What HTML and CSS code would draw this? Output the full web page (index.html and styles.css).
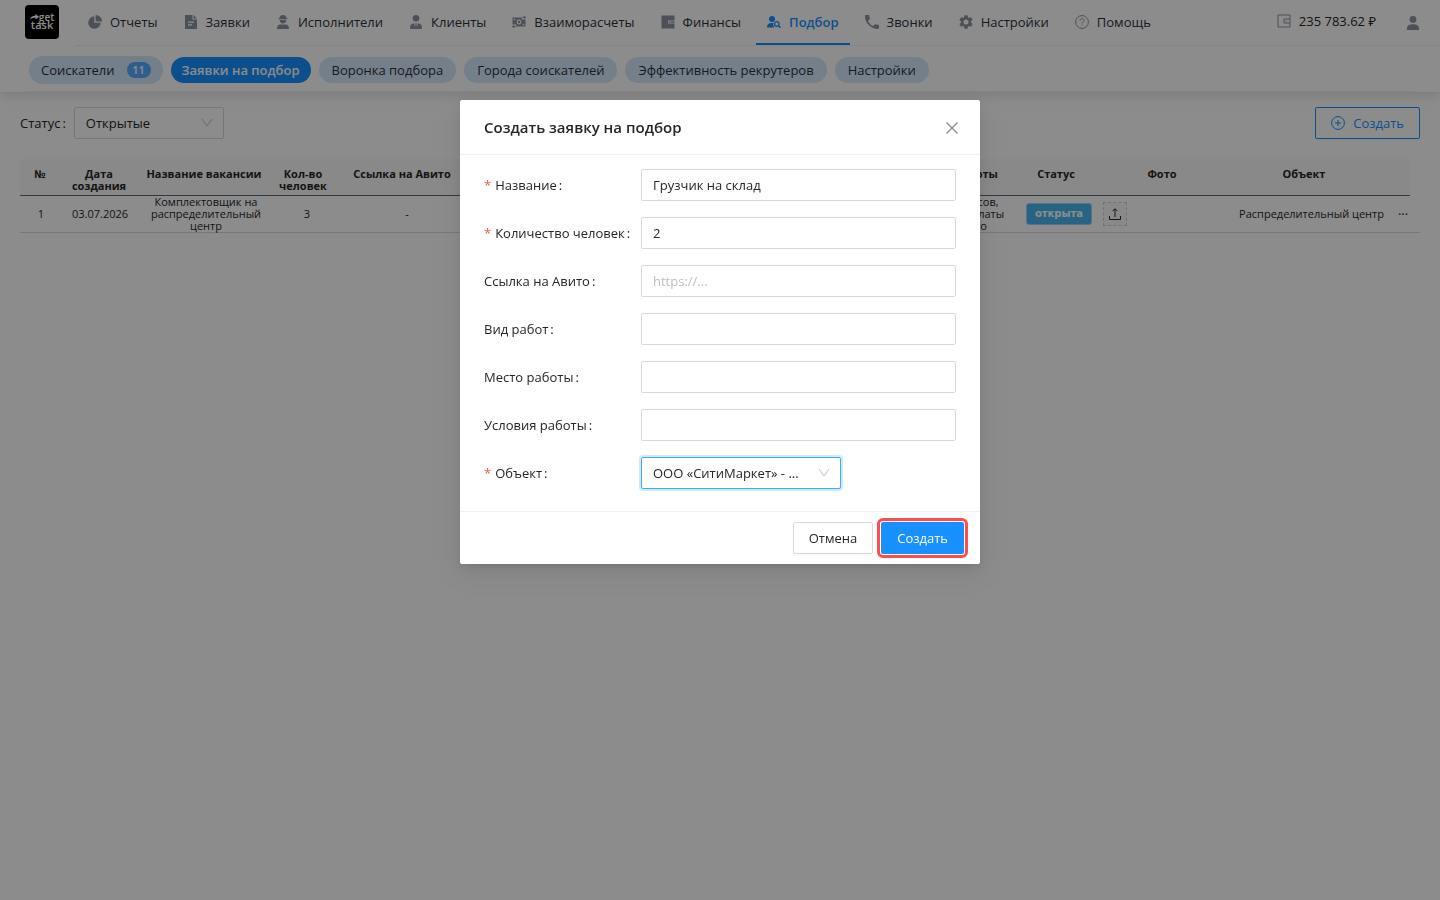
FILE: index.html
```html
<!DOCTYPE html>
<html lang="ru">
<head>
  <meta charset="UTF-8">
  <meta name="viewport" content="width=device-width, initial-scale=1.0">
  <title>Заявки на подбор</title>
  <link rel="stylesheet" href="styles.css">
</head>
<body>
  <header class="header">
    <div class="topbar">
      <a href="#" class="logo" aria-label="get task">
        <span class="logo-top">
          <svg width="9" height="6" viewBox="0 0 9 6"><path d="M0 5.6C.6 3 2.500 1.700 5.400 1.700V0L9 2.800 5.400 5.500V3.700C3 3.700 1.400 4.200 0 5.600z" fill="currentColor"/></svg>
          <span>get</span>
        </span>
        <span class="logo-bottom">task</span>
      </a>
      <nav class="menu">
        <a href="#" class="menu-item">
          <svg class="icon" viewBox="0 0 14 14"><path d="M6.300 1.200A6.300 6.300 0 1 0 12.800 7.800H6.300z"/><path d="M7.600 0V6.400H14A6.400 6.400 0 0 0 7.600 0z"/></svg>
          Отчеты
        </a>
        <a href="#" class="menu-item">
          <svg class="icon" viewBox="0 0 14 14"><path fill-rule="evenodd" d="M1 0h7.500v4.500H13V14H1zM4 6.500v1.300h6V6.500zM4 9.300v1.300h4V9.300z"/><path d="M9.500 0 13 3.500H9.500z"/></svg>
          Заявки
        </a>
        <a href="#" class="menu-item">
          <svg class="icon" viewBox="0 0 14 14"><path d="M3.500 3C3.700 1 5 0 7 0s3.300 1 3.500 3h.8v1.200H2.700V3zM3.700 5h6.600c0 2.200-1.400 3.600-3.300 3.600S3.700 7.200 3.700 5zM1 14c0-3 1-4.500 3.500-4.500h5C12 9.500 13 11 13 14z"/></svg>
          Исполнители
        </a>
        <a href="#" class="menu-item">
          <svg class="icon" viewBox="0 0 14 14"><circle cx="7" cy="3.300" r="3.300"/><path d="M1 14c0-3.600 1-5.500 4-5.700L6 12l.5-2.500-.5-1.200h2L7.500 9.500 8 12l1-3.700c3 .2 4 2.100 4 5.700z"/></svg>
          Клиенты
        </a>
        <a href="#" class="menu-item">
          <svg class="icon" viewBox="0 0 14 14"><path fill-rule="evenodd" d="M.5 2.500h9.300v2h3.700v7H4.200v-2H.5zM7 4.600a2.400 2.400 0 1 0 .01 0zM1.800 3.800v1.400h1.400V3.800zM10.800 8.800v1.400h1.400V8.800z"/><circle cx="7" cy="7" r="1.300"/><path d="M10.500 1.800h1.500V.6L14 2.400l-2 1.800V3h-1.500zM3.500 12.200H2v1.200L0 11.600l2-1.800V11h1.500z"/></svg>
          Взаиморасчеты
        </a>
        <a href="#" class="menu-item">
          <svg class="icon" viewBox="0 0 14 14"><path fill-rule="evenodd" d="M.5 .5h13v5H7v3h6.500v5H.5z"/><path fill-rule="evenodd" d="M7.800 6.200h5.700v1.600H7.800zM8.800 6.500v1h1v-1z"/></svg>
          Финансы
        </a>
        <a href="#" class="menu-item active">
          <svg class="icon" viewBox="0 0 14 14"><circle cx="5" cy="4" r="3"/><path d="M0 12.500C0 9.500 1.500 8 4 8h2.500C6 9.500 6.300 11.300 7.500 12.500z"/><circle cx="9.800" cy="9" r="2.300" fill="none" stroke="currentColor" stroke-width="1.200"/><path d="m11.500 10.700 2 2" stroke="currentColor" stroke-width="1.400"/></svg>
          Подбор
        </a>
        <a href="#" class="menu-item">
          <svg class="icon" viewBox="0 0 14 14"><path d="M.8 0h2.700c.5 0 .8.300.8.800 0 1 .2 1.900.5 2.700.1.300 0 .6-.2.800L2.900 6c1.100 2.200 2.900 4 5.100 5.100l1.700-1.700c.2-.2.500-.3.800-.2.900.3 1.800.5 2.700.5.500 0 .8.300.8.800v2.700c0 .5-.3.800-.8.800C5.900 14 0 8.100 0 .8 0 .3.300 0 .8 0z"/></svg>
          Звонки
        </a>
        <a href="#" class="menu-item">
          <svg class="icon" viewBox="2 2 20 20"><path d="M19.140 12.940c.04-.3.060-.61.060-.94 0-.32-.02-.64-.07-.94l2.030-1.580c.18-.14.230-.41.120-.61l-1.920-3.320c-.12-.22-.37-.29-.59-.22l-2.390.96c-.5-.38-1.030-.7-1.620-.94l-.36-2.540c-.04-.24-.24-.41-.48-.41h-3.840c-.24 0-.43.170-.47.410l-.36 2.540c-.59.240-1.130.570-1.620.940l-2.390-.96c-.22-.08-.47 0-.59.220L2.740 8.870c-.12.210-.08.470.120.610l2.030 1.580c-.05.300-.09.630-.09.940s.02.640.070.940l-2.030 1.580c-.18.140-.23.410-.12.610l1.920 3.320c.12.220.37.290.59.220l2.390-.96c.5.380 1.030.700 1.620.940l.36 2.540c.05.240.240.410.480.410h3.840c.24 0 .44-.17.470-.41l.36-2.540c.59-.24 1.130-.56 1.620-.94l2.390.96c.22.080.47 0 .59-.22l1.920-3.320c.12-.22.070-.47-.12-.61zM12 15.600a3.600 3.600 0 1 1 0-7.200 3.600 3.600 0 0 1 0 7.200z"/></svg>
          Настройки
        </a>
        <a href="#" class="menu-item">
          <svg class="icon line" viewBox="0 0 14 14"><circle cx="7" cy="7" r="6.400"/><path d="M5 5.600C5 4.400 5.900 3.700 7 3.700s2 .7 2 1.800C9 6.900 7 6.900 7 8.500M7 9.600v1"/></svg>
          Помощь
        </a>
      </nav>
      <div class="account">
        <a href="#" class="balance">
          <svg class="icon line" viewBox="0 0 14 14"><path d="M1 1h12v12H1zM13 5H7v4h6M8.500 7h1"/></svg>
          235 783.62 ₽
        </a>
        <a href="#" class="profile" aria-label="Профиль">
          <svg class="icon" viewBox="0 0 14 14"><circle cx="7" cy="3.400" r="3.400"/><path d="M1 14v-1.500C1 9.500 3.500 8.200 7 8.200s6 1.300 6 4.300V14z"/></svg>
        </a>
      </div>
    </div>
    <nav class="subnav">
      <a href="#" class="pill pill-count">Соискатели <span class="count">11</span></a>
      <a href="#" class="pill current">Заявки на подбор</a>
      <a href="#" class="pill">Воронка подбора</a>
      <a href="#" class="pill">Города соискателей</a>
      <a href="#" class="pill">Эффективность рекрутеров</a>
      <a href="#" class="pill">Настройки</a>
    </nav>
  </header>

  <main class="content">
    <div class="toolbar">
      <label for="status">Статус<span class="colon">:</span></label>
      <div class="select-box status-select">
        <select id="status">
          <option>Открытые</option>
        </select>
        <svg class="arrow" viewBox="0 0 12 12"><path d="M1 2l5 7 5-7"/></svg>
      </div>
      <button type="button" class="btn btn-ghost">
        <svg class="icon line" viewBox="0 0 14 14"><circle cx="7" cy="7" r="6.400"/><path d="M7 4v6M4 7h6"/></svg>
        Создать
      </button>
    </div>

    <table class="requests">
      <thead>
        <tr>
          <th>№</th>
          <th>Дата создания</th>
          <th>Название вакансии</th>
          <th>Кол-во человек</th>
          <th>Ссылка на Авито</th>
          <th>Вид работ</th>
          <th>Место работы</th>
          <th>Условия работы</th>
          <th>Статус</th>
          <th>Фото</th>
          <th>Объект</th>
          <th></th>
        </tr>
      </thead>
      <tbody>
        <tr>
          <td>1</td>
          <td>03.07.2026</td>
          <td>Комплектовщик на распределительный центр</td>
          <td>3</td>
          <td>-</td>
          <td></td>
          <td></td>
          <td>График 12 часов,<br>недельные оплаты<br>официально</td>
          <td><span class="tag">открыта</span></td>
          <td class="photo">
            <button type="button" class="upload" aria-label="Загрузить фото">
              <svg class="line" viewBox="0 0 14 14"><path d="M7 10V2M4.500 4.200 7 1.700l2.500 2.500M1.500 9v3.500h11V9"/></svg>
            </button>
          </td>
          <td>Распределительный центр</td>
          <td><button type="button" class="more" aria-label="Действия">···</button></td>
        </tr>
      </tbody>
    </table>
  </main>

  <div class="mask">
    <form class="modal" role="dialog" aria-labelledby="modal-title">
      <div class="modal-header">
        <h2 id="modal-title">Создать заявку на подбор</h2>
        <button type="button" class="close" aria-label="Закрыть">
          <svg viewBox="0 0 14 14"><path d="M1.500 1.500l11 11M12.500 1.500l-11 11"/></svg>
        </button>
      </div>
      <div class="modal-body">
        <label class="required" for="name">Название<span class="colon">:</span></label>
        <input id="name" type="text" value="Грузчик на склад">
        <label class="required" for="people">Количество человек<span class="colon">:</span></label>
        <input id="people" type="text" value="2">
        <label for="avito">Ссылка на Авито<span class="colon">:</span></label>
        <input id="avito" type="text" placeholder="https://...">
        <label for="kind">Вид работ<span class="colon">:</span></label>
        <input id="kind" type="text">
        <label for="place">Место работы<span class="colon">:</span></label>
        <input id="place" type="text">
        <label for="terms">Условия работы<span class="colon">:</span></label>
        <input id="terms" type="text">
        <label class="required" for="object">Объект<span class="colon">:</span></label>
        <div class="select-box object-select">
          <select id="object">
            <option>ООО «СитиМаркет» - ...</option>
          </select>
          <svg class="arrow" viewBox="0 0 12 12"><path d="M1 2l5 7 5-7"/></svg>
        </div>
      </div>
      <div class="modal-footer">
        <button type="button" class="btn">Отмена</button>
        <button type="submit" class="btn btn-primary">Создать</button>
      </div>
    </form>
  </div>
</body>
</html>
```

FILE: styles.css
```css
* {
  margin: 0;
  padding: 0;
  box-sizing: border-box;
}

body {
  min-height: 100vh;
  background: #fff;
  color: #262626;
  font-family: "Open Sans", "Noto Sans", sans-serif;
  font-size: 13px;
  line-height: 22px;
}

a {
  color: inherit;
  text-decoration: none;
}

input,
select,
button {
  font: inherit;
  color: inherit;
}

.icon {
  width: 14px;
  height: 14px;
  flex: none;
  color: #8c939d;
  fill: currentColor;
}

.line {
  fill: none;
  stroke: currentColor;
}

/* Header */
.header {
  box-shadow: 0 2px 12px rgba(0, 0, 0, 0.15);
}

.topbar {
  display: flex;
  height: 46px;
  padding-left: 25px;
}

.logo {
  display: flex;
  flex-direction: column;
  align-items: center;
  justify-content: center;
  width: 34px;
  height: 34px;
  margin: 5px 16px 0 0;
  padding-bottom: 3px;
  border-radius: 4px;
  background: #000;
  color: #fff;
  font-size: 11px;
  font-weight: 600;
  line-height: 8px;
}

.logo-top {
  display: flex;
  align-items: center;
  font-size: 10px;
}

.menu {
  display: flex;
  flex: 1;
  padding-left: 2px;
  border-bottom: 1px solid #f0f0f0;
  color: #2b303b;
}

.menu-item {
  display: flex;
  align-items: center;
  gap: 8px;
  margin-right: 4px;
  padding: 0 11px;
  border-bottom: 2px solid transparent;
  white-space: nowrap;
}

.menu-item.active {
  border-color: #1890ff;
  color: #1890ff;
  font-weight: 600;
}

.active .icon {
  color: #1890ff;
}

.account {
  display: flex;
  align-items: center;
  gap: 30px;
  padding-right: 20px;
  border-bottom: 1px solid #f0f0f0;
}

.balance {
  display: flex;
  align-items: center;
  gap: 8px;
  padding-bottom: 3px;
  white-space: nowrap;
}

.profile {
  display: flex;
}

.subnav {
  display: flex;
  align-items: center;
  gap: 8px;
  height: 46px;
  margin: 0 25px;
  padding: 2px 4px 0;
  border-bottom: 1px solid #f0f0f0;
}

.pill {
  display: flex;
  align-items: center;
  height: 26px;
  padding: 0 13px;
  border-radius: 14px;
  background: #d5e8fb;
  color: #2b303b;
  white-space: nowrap;
}

.pill-count {
  height: 28px;
  padding: 0 12px;
}

.pill.current {
  padding: 0 11px;
  background: #1890ff;
  color: #fff;
  font-weight: 600;
}

.count {
  width: 24px;
  height: 16px;
  margin-left: 12px;
  border-radius: 8px;
  background: #57abff;
  color: #fff;
  font-size: 11px;
  font-weight: 600;
  line-height: 16px;
  text-align: center;
}

/* Page content */
.content {
  padding: 15px 20px;
}

.toolbar {
  display: flex;
  align-items: center;
  height: 32px;
  margin-bottom: 20px;
}

.toolbar .btn {
  margin-left: auto;
}

.colon {
  margin: 0 8px 0 2px;
}

.select-box {
  display: grid;
  align-items: center;
}

.select-box select,
.select-box .arrow {
  grid-area: 1 / 1;
}

.select-box .arrow {
  width: 12px;
  height: 12px;
  margin-right: 11px;
  justify-self: end;
  fill: none;
  stroke: #bfbfbf;
  pointer-events: none;
}

.status-select {
  width: 150px;
}

input,
select {
  width: 100%;
  height: 32px;
  padding: 0 11px;
  border: 1px solid #d9d9d9;
  border-radius: 2px;
  background: #fff;
  appearance: none;
  outline: none;
}

input::placeholder {
  color: #bfbfbf;
}

.btn {
  display: inline-flex;
  align-items: center;
  justify-content: center;
  height: 32px;
  padding: 0 15px;
  border: 1px solid #d9d9d9;
  border-radius: 2px;
  background: #fff;
  box-shadow: 0 2px 0 rgba(0, 0, 0, 0.02);
}

.btn-ghost {
  gap: 8px;
  border-color: #1890ff;
  color: #1890ff;
}

.btn-ghost .icon {
  color: #1890ff;
}

.requests,
.requests thead,
.requests tbody {
  display: block;
}

.requests {
  font-size: 11px;
  line-height: 12px;
  text-align: center;
}

.requests tr {
  display: grid;
}

.requests thead {
  margin-right: 10px;
}

.requests thead tr {
  grid-template-columns: 40px 78px 132px 66px 132px 1fr 1fr 132px 78px 134px 150px 31px;
  min-height: 37px;
  padding-top: 9px;
  border-bottom: 1px solid #5c6b77;
  background: #fafafa;
}

.requests th {
  font-weight: 700;
}

.requests tbody tr {
  grid-template-columns: 42px 76px 136px 66px 134px 1fr 1fr 132px 80px 138px 149px 34px;
  align-items: center;
  border-bottom: 1px solid #d9d9d9;
}

.requests td {
  padding: 0 4px;
}

.requests td:nth-child(11) {
  padding: 0;
}

.tag {
  display: inline-block;
  padding: 3px 8px;
  border: 1px solid #91d5ff;
  border-radius: 3px;
  background: #4ab5f1;
  color: #fff;
  font-family: "DejaVu Sans", sans-serif;
  font-size: 10px;
  font-weight: 700;
  line-height: 14px;
}

.upload {
  display: flex;
  width: 24px;
  height: 24px;
  padding: 4px;
  border: 1px dashed #d0d0d0;
  background: #fafafa;
}

.more {
  border: 0;
  background: none;
  font-size: 13px;
}

/* Modal */
.mask {
  position: fixed;
  inset: 0;
  padding: 100px 16px 0;
  background: rgba(0, 0, 0, 0.45);
}

.modal {
  max-width: 520px;
  margin: 0 auto;
  border-radius: 2px;
  background: #fff;
  box-shadow: 0 3px 6px -4px rgba(0, 0, 0, 0.12), 0 6px 16px rgba(0, 0, 0, 0.08), 0 9px 28px 8px rgba(0, 0, 0, 0.05);
}

.modal-header {
  display: flex;
  align-items: center;
  justify-content: space-between;
  padding: 16px 21px 16px 24px;
  border-bottom: 1px solid #f0f0f0;
}

.modal-header h2 {
  font-size: 15px;
  font-weight: 600;
  line-height: 22px;
}

.close {
  display: flex;
  padding-top: 2px;
  border: 0;
  background: none;
}

.close svg {
  width: 14px;
  height: 14px;
  fill: none;
  stroke: #8c8c8c;
  stroke-width: 1.3;
}

.modal-body {
  display: grid;
  grid-template-columns: 157px 1fr;
  row-gap: 16px;
  align-items: center;
  padding: 14px 24px 22px;
}

.modal-body label {
  white-space: nowrap;
}

.required::before {
  content: "*";
  margin-right: 4px;
  color: #ff4d4f;
}

.object-select {
  width: 200px;
}

.object-select select {
  border-color: #40a9ff;
  box-shadow: 0 0 0 2px rgba(24, 144, 255, 0.2);
}

.modal-footer {
  display: flex;
  justify-content: flex-end;
  gap: 8px;
  padding: 10px 16px;
  border-top: 1px solid #f0f0f0;
}

.btn-primary {
  padding: 0 16px;
  border: 0;
  background: #1890ff;
  color: #fff;
  outline: 3px solid #ff4d4f;
  outline-offset: 1px;
}
```
